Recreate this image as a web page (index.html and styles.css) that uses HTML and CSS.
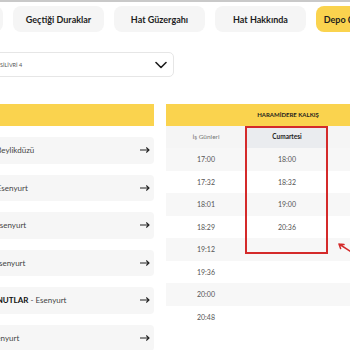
FILE: index.html
```html
<!DOCTYPE html>
<html lang="tr">
<head>
  <meta charset="UTF-8">
  <title>Hat Detayı</title>
  <link rel="stylesheet" href="styles.css">
</head>
<body>
  <div class="topline"></div>

  <nav class="tabs">
    <button class="tab">Sefer Saatleri</button>
    <button class="tab">Geçtiği Duraklar</button>
    <button class="tab">Hat Güzergahı</button>
    <button class="tab">Hat Hakkında</button>
    <button class="tab tab-active">Depo Çıkış Saatleri</button>
  </nav>

  <div class="select-box">
    <span class="select-text">SİLİVRİ 4</span>
    <svg class="chevron" width="12" height="8" viewBox="0 0 12 8">
      <path d="M1 1.5l5 5 5-5" fill="none" stroke="#1d1d1d" stroke-width="1.6" stroke-linecap="round" stroke-linejoin="round"/>
    </svg>
  </div>

  <div class="main">
    <section class="stops">
      <div class="panel-head"></div>
      <ul class="stop-list">
        <li class="stop"><span><b>GÜRPINAR</b> - Beylikdüzü</span><svg class="arrow" width="10" height="8" viewBox="0 0 10 8"><path d="M0 4h9M6.3 1.5l2.7 2.5-2.7 2.5" fill="none" stroke="#222" stroke-width="1.1"/></svg></li>
        <li class="stop"><span><b>YEŞİLKENT</b> - Esenyurt</span><svg class="arrow" width="10" height="8" viewBox="0 0 10 8"><path d="M0 4h9M6.3 1.5l2.7 2.5-2.7 2.5" fill="none" stroke="#222" stroke-width="1.1"/></svg></li>
        <li class="stop"><span><b>İNCİRTEPE</b> - Esenyurt</span><svg class="arrow" width="10" height="8" viewBox="0 0 10 8"><path d="M0 4h9M6.3 1.5l2.7 2.5-2.7 2.5" fill="none" stroke="#222" stroke-width="1.1"/></svg></li>
        <li class="stop"><span><b>HÜRRİYET</b> - Esenyurt</span><svg class="arrow" width="10" height="8" viewBox="0 0 10 8"><path d="M0 4h9M6.3 1.5l2.7 2.5-2.7 2.5" fill="none" stroke="#222" stroke-width="1.1"/></svg></li>
        <li class="stop"><span><b>AKEVLER KONUTLAR</b> - Esenyurt</span><svg class="arrow" width="10" height="8" viewBox="0 0 10 8"><path d="M0 4h9M6.3 1.5l2.7 2.5-2.7 2.5" fill="none" stroke="#222" stroke-width="1.1"/></svg></li>
        <li class="stop"><span><b>KAVAKLI</b> - Esenyurt</span><svg class="arrow" width="10" height="8" viewBox="0 0 10 8"><path d="M0 4h9M6.3 1.5l2.7 2.5-2.7 2.5" fill="none" stroke="#222" stroke-width="1.1"/></svg></li>
      </ul>
    </section>

    <section class="timetable">
      <div class="tt-head">HARAMİDERE KALKIŞ</div>
      <div class="tt-sub">
        <div>İş Günleri</div>
        <div class="tt-sub-active">Cumartesi</div>
        <div>Pazar</div>
      </div>
      <div class="tt-body">
        <div class="tt-row"><div>17:00</div><div>18:00</div><div></div></div>
        <div class="tt-row"><div>17:32</div><div>18:32</div><div></div></div>
        <div class="tt-row"><div>18:01</div><div>19:00</div><div></div></div>
        <div class="tt-row"><div>18:29</div><div>20:36</div><div></div></div>
        <div class="tt-row"><div>19:12</div><div></div><div></div></div>
        <div class="tt-row"><div>19:36</div><div></div><div></div></div>
        <div class="tt-row"><div>20:00</div><div></div><div></div></div>
        <div class="tt-row"><div>20:48</div><div></div><div></div></div>
      </div>
      <div class="mark-box"></div>
    </section>
  </div>

  <svg class="mark-arrow" width="16" height="12" viewBox="0 0 16 12">
    <path d="M1 1l14 9M1 1l5 0.6M1 1l1.6 4.6" fill="none" stroke="#d42a2a" stroke-width="1.5" stroke-linecap="round"/>
  </svg>
</body>
</html>
```

FILE: styles.css
```css
:root {
  --yellow: #fad34e;
  --soft-bg: #f5f5f5;
  --text-dark: #1d1d1d;
  --text-gray: #555;
  --mark-red: #d42a2a;
}

body {
  margin: 0;
  width: 350px;
  height: 350px;
  overflow: hidden;
  position: relative;
  font-family: "Lato", "Noto Sans", sans-serif;
  background: #fff;
  color: var(--text-dark);
}

.topline {
  height: 2px;
  background: #c9c9c9;
}

.tabs {
  display: flex;
  gap: 10px;
  margin: 4px 0 0 -88px;
}

.tab {
  flex: 0 0 91px;
  height: 26px;
  border: none;
  border-radius: 8px;
  background: var(--soft-bg);
  font-family: inherit;
  font-size: 9px;
  font-weight: bold;
  color: var(--text-dark);
  padding: 0;
  white-space: nowrap;
  overflow: hidden;
}

.tab-active {
  background: var(--yellow);
}

.select-box {
  display: flex;
  align-items: center;
  justify-content: space-between;
  width: 182px;
  height: 25px;
  margin: 20px 0 0 -8px;
  padding: 0 6px 0 7px;
  box-sizing: border-box;
  border: 1px solid #e6e6e6;
  border-radius: 5px;
}

.select-text {
  font-size: 5.5px;
  color: var(--text-gray);
}

.main {
  display: flex;
  gap: 12px;
  margin-top: 27px;
}

.stops {
  flex: 0 0 214px;
  margin-left: -60px;
}

.panel-head {
  height: 22px;
  background: var(--yellow);
}

.stop-list {
  list-style: none;
  margin: 11px 0 0;
  padding: 0;
  display: flex;
  flex-direction: column;
  gap: 11px;
}

.stop {
  display: flex;
  align-items: center;
  justify-content: space-between;
  height: 26.5px;
  padding: 0 4px 0 8px;
  background: #f6f6f6;
  border-radius: 4px;
  font-size: 8px;
  color: #444;
  white-space: nowrap;
}

.stop b {
  color: #111;
}

.timetable {
  position: relative;
  flex: 0 0 244px;
}

.tt-head {
  height: 22px;
  line-height: 22px;
  background: var(--yellow);
  text-align: center;
  font-size: 6px;
  font-weight: bold;
}

.tt-sub,
.tt-row {
  display: grid;
  grid-template-columns: 80px 82px 82px;
  text-align: center;
}

.tt-sub {
  height: 22px;
  line-height: 22px;
  background: var(--soft-bg);
  font-size: 6.5px;
  color: #777;
}

.tt-sub-active {
  background: #eaecef;
  color: var(--text-dark);
  font-weight: bold;
}

.tt-row {
  height: 22.5px;
  line-height: 22.5px;
  font-size: 7px;
  color: var(--text-gray);
}

.tt-row:nth-child(odd) {
  background: #f7f7f7;
}

.mark-box {
  position: absolute;
  left: 79px;
  top: 22px;
  width: 83px;
  height: 128px;
  box-sizing: border-box;
  border: 2px solid var(--mark-red);
}

.mark-arrow {
  position: absolute;
  left: 338px;
  top: 243px;
}
```
